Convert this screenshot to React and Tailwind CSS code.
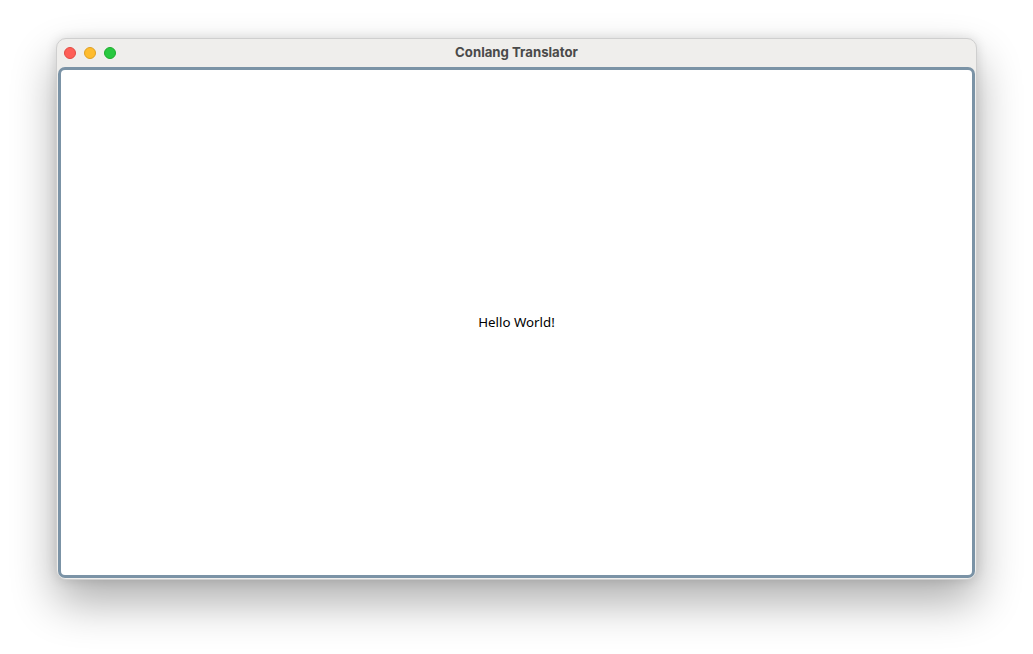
import React from "react";

export default function App() {
  return (
    <div className="w-[1033px] h-[654px] bg-white pt-[38px] pl-[56px]" style={{ fontFamily: '"Noto Sans", sans-serif' }}>
      <div className="w-[921px] h-[542px] rounded-[10px] border border-[#cfcfcf] bg-[#efeeec] flex flex-col shadow-[0_22px_45px_rgba(0,0,0,0.32),0_0_12px_rgba(0,0,0,0.12)]">
        <div className="relative h-[28px] flex items-center shrink-0">
          <div className="flex items-center gap-[8px] pl-[7px]">
            <span className="w-[12px] h-[12px] rounded-full bg-[#fe5f57] border border-[#e24b43]" />
            <span className="w-[12px] h-[12px] rounded-full bg-[#febc2e] border border-[#dfa023]" />
            <span className="w-[12px] h-[12px] rounded-full bg-[#28c840] border border-[#1dad2b]" />
          </div>
          <div className="absolute inset-0 flex items-center justify-center pointer-events-none">
            <span className="text-[13.2px] font-bold text-[#4a4a4a]" style={{ fontFamily: '"Inter", "Liberation Sans", sans-serif' }}>Conlang Translator</span>
          </div>
        </div>
        <div className="flex-1 mx-[1px] mb-[1px] rounded-[7px] border-[3px] border-[#7b93a6] bg-white flex items-center justify-center">
          <span className="text-[13.3px] text-black">Hello World!</span>
        </div>
      </div>
    </div>
  );
}
